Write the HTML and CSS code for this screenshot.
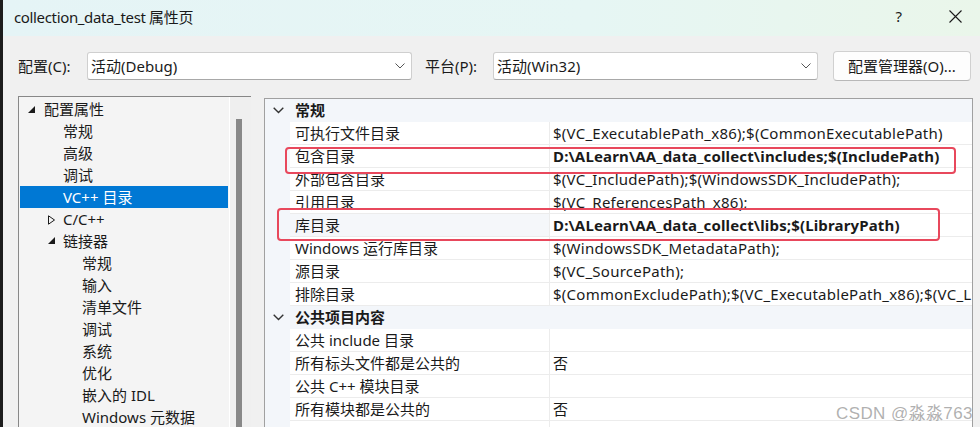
FILE: index.html
```html
<!DOCTYPE html>
<html lang="zh-CN">
<head>
<meta charset="utf-8">
<title>collection_data_test 属性页</title>
<link rel="stylesheet" href="styles.css">
</head>
<body>
<div class="strip"></div>
<div class="dialog">
  <div class="titlebar">
    <span class="title">collection_data_test 属性页</span>
    <span class="help">?</span>
    <svg class="close" width="13" height="13" viewBox="0 0 13 13"><path d="M0.5 0.5 L12.5 12.5 M12.5 0.5 L0.5 12.5" stroke="#1a1a1a" stroke-width="1.1" fill="none"/></svg>
  </div>
  <div class="toolbar">
    <span class="label">配置(C):</span>
    <div class="combo combo-config"><span>活动(Debug)</span><svg class="chev" width="10" height="6" viewBox="0 0 10 6"><path d="M0.5 0.5 L5 5 L9.5 0.5" stroke="#555" stroke-width="1" fill="none"/></svg></div>
    <span class="label label-platform">平台(P):</span>
    <div class="combo combo-platform"><span>活动(Win32)</span><svg class="chev" width="10" height="6" viewBox="0 0 10 6"><path d="M0.5 0.5 L5 5 L9.5 0.5" stroke="#555" stroke-width="1" fill="none"/></svg></div>
    <div class="button">配置管理器(O)...</div>
  </div>
  <div class="main">
    <div class="tree">
      <div class="tree-list">
        <div class="node lvl0"><svg class="arrow" width="8" height="8" viewBox="0 0 8 8"><polygon points="7,0 7,7 0,7" fill="#1a1a1a"/></svg>配置属性</div>
        <div class="node lvl1">常规</div>
        <div class="node lvl1">高级</div>
        <div class="node lvl1">调试</div>
        <div class="node lvl1 selected">VC++ 目录</div>
        <div class="node lvl1"><svg class="arrow" width="8" height="10" viewBox="0 0 8 10"><polygon points="0.5,0.8 6.5,5 0.5,9.2" fill="none" stroke="#1a1a1a" stroke-width="1"/></svg>C/C++</div>
        <div class="node lvl1"><svg class="arrow" width="8" height="8" viewBox="0 0 8 8"><polygon points="7,0 7,7 0,7" fill="#1a1a1a"/></svg>链接器</div>
        <div class="node lvl2">常规</div>
        <div class="node lvl2">输入</div>
        <div class="node lvl2">清单文件</div>
        <div class="node lvl2">调试</div>
        <div class="node lvl2">系统</div>
        <div class="node lvl2">优化</div>
        <div class="node lvl2">嵌入的 IDL</div>
        <div class="node lvl2">Windows 元数据</div>
      </div>
      <div class="scroll"><div class="thumb"></div></div>
    </div>
    <div class="grid">
      <div class="row header"><div class="gutter"><svg width="11" height="7" viewBox="0 0 11 7"><path d="M0.7 0.7 L5.5 5.5 L10.3 0.7" stroke="#333" stroke-width="1.4" fill="none"/></svg></div><div class="htext">常规</div></div>
      <div class="row"><div class="gutter"></div><div class="name">可执行文件目录</div><div class="value">$(VC_ExecutablePath_x86);$(CommonExecutablePath)</div></div>
      <div class="row"><div class="gutter"></div><div class="name">包含目录</div><div class="value bold">D:\ALearn\AA_data_collect\includes;$(IncludePath)</div></div>
      <div class="row"><div class="gutter"></div><div class="name">外部包含目录</div><div class="value">$(VC_IncludePath);$(WindowsSDK_IncludePath);</div></div>
      <div class="row"><div class="gutter"></div><div class="name">引用目录</div><div class="value">$(VC_ReferencesPath_x86);</div></div>
      <div class="row tinted"><div class="gutter"></div><div class="name">库目录</div><div class="value bold">D:\ALearn\AA_data_collect\libs;$(LibraryPath)</div></div>
      <div class="row"><div class="gutter"></div><div class="name">Windows 运行库目录</div><div class="value">$(WindowsSDK_MetadataPath);</div></div>
      <div class="row"><div class="gutter"></div><div class="name">源目录</div><div class="value">$(VC_SourcePath);</div></div>
      <div class="row"><div class="gutter"></div><div class="name">排除目录</div><div class="value">$(CommonExcludePath);$(VC_ExecutablePath_x86);$(VC_LibraryPath_x86)</div></div>
      <div class="row header"><div class="gutter"><svg width="11" height="7" viewBox="0 0 11 7"><path d="M0.7 0.7 L5.5 5.5 L10.3 0.7" stroke="#333" stroke-width="1.4" fill="none"/></svg></div><div class="htext">公共项目内容</div></div>
      <div class="row"><div class="gutter"></div><div class="name">公共 include 目录</div><div class="value"></div></div>
      <div class="row"><div class="gutter"></div><div class="name">所有标头文件都是公共的</div><div class="value">否</div></div>
      <div class="row"><div class="gutter"></div><div class="name">公共 C++ 模块目录</div><div class="value"></div></div>
      <div class="row"><div class="gutter"></div><div class="name">所有模块都是公共的</div><div class="value">否</div></div>
      <div class="row"><div class="gutter"></div><div class="name"></div><div class="value"></div></div>
    </div>
  </div>
</div>
<div class="mark mark-include"></div>
<div class="mark mark-lib"></div>
<div class="watermark">CSDN @淼淼763</div>
</body>
</html>
```
FILE: styles.css
```css
html, body {
  margin: 0;
  padding: 0;
}
body {
  width: 980px;
  height: 427px;
  overflow: hidden;
  display: flex;
  background: #f0f0f0;
  font-family: "Noto Sans", "Noto Sans CJK SC", sans-serif;
  font-size: 15px;
  color: #1a1a1a;
  position: relative;
}
.strip {
  width: 3px;
  flex: none;
  background: #1c1c1c;
}
.dialog {
  flex: 1;
  display: flex;
  flex-direction: column;
  min-width: 0;
}
.titlebar {
  height: 36px;
  flex: none;
  display: flex;
  align-items: center;
  padding-left: 11px;
  background: linear-gradient(90deg, #e5f4f6 0%, #e6f6f4 60%, #eaf6ea 100%);
}
.title {
  font-size: 15px;
  line-height: 20px;
  margin-top: -2px;
  letter-spacing: -0.35px;
}
.help {
  margin-left: auto;
  font-size: 15px;
  margin-right: 47px;
  margin-top: -4px;
}
.close {
  margin-right: 18px;
  margin-top: -4px;
}
.toolbar {
  height: 60px;
  flex: none;
  display: flex;
  align-items: flex-start;
  padding: 15px 0 0 15px;
  box-sizing: border-box;
}
.label {
  line-height: 28px;
  margin-top: 1px;
  width: 69px;
  flex: none;
}
.label-platform {
  margin-left: 13px;
  width: 68px;
}
.combo {
  width: 325px;
  height: 28px;
  margin-top: 1px;
  box-sizing: border-box;
  background: #ffffff;
  border: 1px solid #cfcfcf;
  border-bottom-color: #a8a8a8;
  border-radius: 3px;
  display: flex;
  align-items: center;
  padding-left: 3px;
  flex: none;
}
.combo span {
  flex: 1;
  line-height: 26px;
}
.combo .chev {
  margin-right: 6px;
}
.button {
  margin-left: 15px;
  width: 138px;
  height: 30px;
  box-sizing: border-box;
  border: 1px solid #d0d0d0;
  border-bottom-color: #b8b8b8;
  border-radius: 4px;
  background: #fdfdfd;
  text-align: center;
  line-height: 28px;
  flex: none;
}
.main {
  flex: 1;
  display: flex;
  align-items: flex-start;
  padding-left: 15px;
  min-height: 0;
}
.tree {
  width: 233px;
  height: 340px;
  flex: none;
  box-sizing: border-box;
  border: 1px solid #878787;
  background: #f4f4f4;
  display: flex;
}
.tree-list {
  width: 208px;
  padding: 1px 0 0 1px;
  flex: none;
}
.node {
  height: 22px;
  line-height: 22px;
  white-space: nowrap;
  position: relative;
  display: flex;
  align-items: center;
}
.node .arrow {
  position: absolute;
  top: 7px;
}
.lvl0 { padding-left: 24px; }
.lvl0 .arrow { left: 8px; top: 8px; }
.lvl1 { padding-left: 43px; }
.lvl1 .arrow { left: 28px; }
.lvl2 { padding-left: 62px; }
.selected {
  background: #0078d4;
  color: #ffffff;
}
.scroll {
  flex: none;
  width: 21px;
  margin-left: 1px;
  border-left: 1px solid #ffffff;
  background: #efefef;
  position: relative;
}
.thumb {
  position: absolute;
  left: 6px;
  top: 22px;
  width: 6px;
  height: 320px;
  background: #888888;
}
.grid {
  margin-left: 13px;
  margin-top: 2px;
  width: 709px;
  height: 340px;
  flex: none;
  box-sizing: border-box;
  border: 1px solid #a0a0a0;
  border-bottom: none;
  background: #f3f6fa;
}
.row {
  height: 23px;
  box-sizing: border-box;
  display: flex;
  line-height: 22px;
  white-space: nowrap;
}
.row .gutter {
  width: 25px;
  flex: none;
  display: flex;
  align-items: center;
  justify-content: center;
  padding-left: 2px;
  box-sizing: border-box;
}
.header .gutter svg {
  margin-top: -1px;
}
.htext {
  font-weight: 700;
  padding-left: 5px;
}
.name {
  width: 260px;
  flex: none;
  box-sizing: border-box;
  padding-left: 5px;
  background: #ffffff;
  border-right: 1px solid #ececec;
  border-bottom: 1px solid #ececec;
}
.value {
  flex: 1;
  min-width: 0;
  overflow: hidden;
  padding-left: 3px;
  background: #ffffff;
  border-bottom: 1px solid #ececec;
  letter-spacing: 0.25px;
}
.tinted .name {
  background: #f5f7fa;
}
.value.bold {
  font-weight: 700;
  letter-spacing: 0.15px;
}
.mark {
  position: absolute;
  border: 2px solid #e8485c;
  border-radius: 4px;
  box-sizing: border-box;
}
.mark-include {
  left: 285px;
  top: 147px;
  width: 671px;
  height: 27px;
}
.mark-lib {
  left: 277px;
  top: 208px;
  width: 663px;
  height: 33px;
}
.watermark {
  position: absolute;
  left: 836px;
  top: 399px;
  font-family: "Liberation Sans", "Noto Sans CJK SC", sans-serif;
  font-size: 17px;
  color: rgba(150, 150, 150, 0.75);
  letter-spacing: 0.4px;
}
```
